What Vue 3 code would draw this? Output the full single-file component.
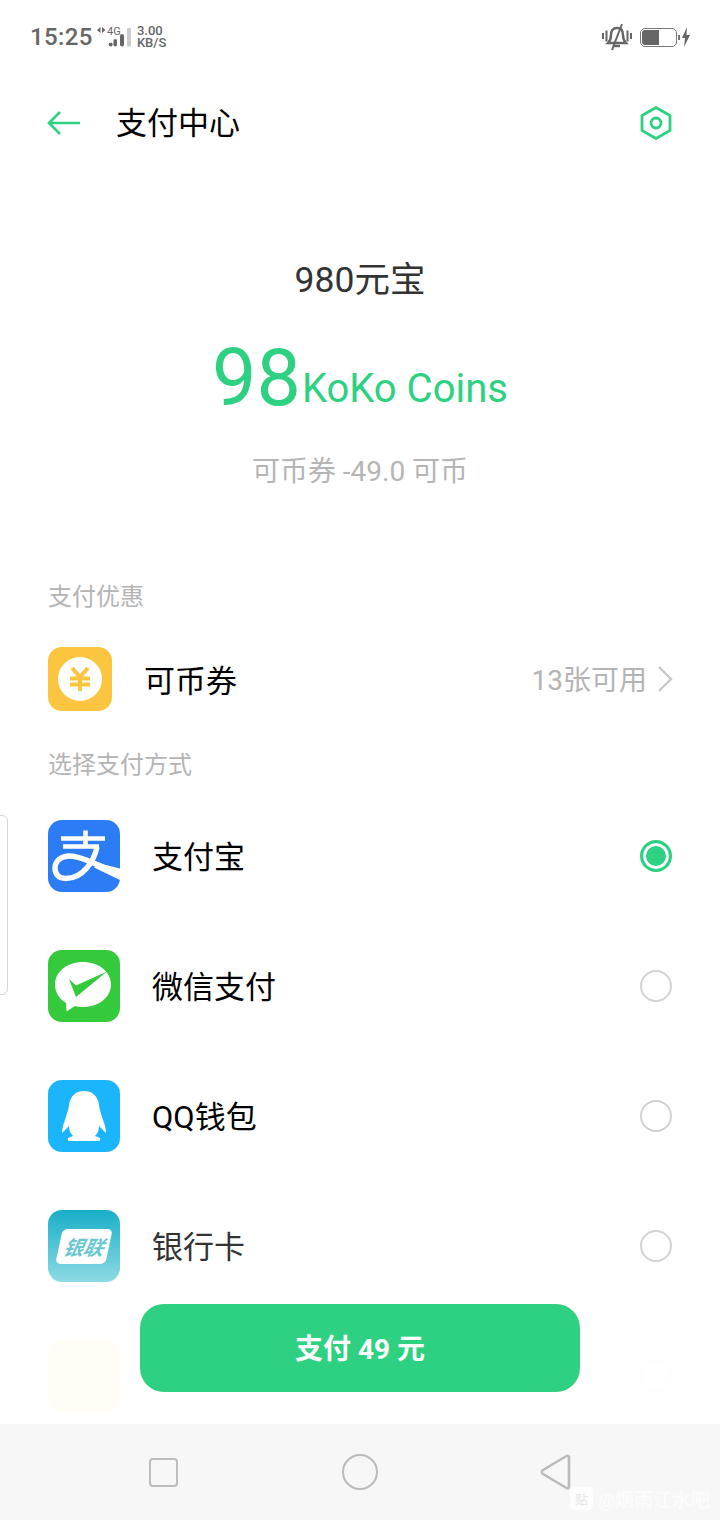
<template>
  <div class="page">
    <header class="status">
      <div class="status__left">
        <span class="status__time">15:25</span>
        <svg class="status__signal" width="38" height="26" viewBox="0 0 38 26">
          <path d="M4.500 3v6L1 6zM6 3v6l3.500-3z" fill="#666" />
          <text x="11" y="11" class="status__net">4G</text>
          <circle cx="14.700" cy="20.500" r="2" fill="#666" />
          <rect x="17.500" y="15" width="3.500" height="7.500" rx="1.700" fill="#666" />
          <rect x="24" y="10" width="4" height="12.500" rx="2" fill="#666" />
          <rect x="31" y="4" width="4" height="18.500" rx="1" fill="#ccc" />
        </svg>
        <div class="status__speed">
          <span>3.00</span>
          <span>KB/S</span>
        </div>
      </div>
      <div class="status__right">
        <svg width="30" height="28" viewBox="0 0 30 28" fill="none" stroke="#666">
          <path d="M1 10v6M4.500 7.500v11M25.500 7.500v11M29 10v6" stroke-width="2" />
          <path d="M15 5c-4.500 0-6 3-6 7 0 4-1 6-3 8h18c-2-2-3-4-3-8 0-4-1.500-7-6-7z" stroke-width="2.400" />
          <path d="M11 23h7" stroke-width="2.400" />
          <path d="M20 1L10 27" stroke-width="2" />
        </svg>
        <div class="battery"><div class="battery__fill"></div></div>
        <span class="battery__tip"></span>
        <svg width="8" height="20" viewBox="0 0 8 20"><path d="M5 0L0 11h3l-1 9 6-12H4.500z" fill="#666" /></svg>
      </div>
    </header>

    <nav class="topbar">
      <div class="topbar__left">
        <svg width="34" height="26" viewBox="0 0 34 26" fill="none" stroke="#2dd181" stroke-width="2.600">
          <path d="M33 13H2M13 2L2 13l11 11" />
        </svg>
        <h1 class="topbar__title">支付中心</h1>
      </div>
      <svg width="34" height="36" viewBox="0 0 34 36" fill="none" stroke="#2dd181" stroke-width="2.800">
        <path d="M17 2.500l14 8v15l-14 8-14-8v-15z" stroke-linejoin="round" />
        <circle cx="17" cy="18" r="5" />
      </svg>
    </nav>

    <section class="summary">
      <div class="summary__name">980元宝</div>
      <div class="summary__price"><span class="summary__num">98</span><span class="summary__unit">KoKo Coins</span></div>
      <div class="summary__note">可币券 -49.0 可币</div>
    </section>

    <div class="label label--first">支付优惠</div>
    <div class="coupon">
      <div class="coupon__icon">
        <div class="coupon__coin">
          <svg width="22" height="24" viewBox="0 0 22 24" fill="none" stroke="#fcc53f" stroke-width="4">
            <path d="M3 1l8 9 8-9M11 10v14M1 11.500h20M1 17.500h20" />
          </svg>
        </div>
      </div>
      <span class="coupon__name">可币券</span>
      <span class="coupon__count">13张可用</span>
      <svg width="16" height="26" viewBox="0 0 16 26" fill="none" stroke="#c9c9c9" stroke-width="2.400">
        <path d="M2 1l12 12L2 25" />
      </svg>
    </div>

    <div class="label">选择支付方式</div>
    <ul class="methods">
      <li v-for="m in methods" :key="m.id" class="method" :class="{ 'method--hidden': m.id === 'other' }">
        <div class="method__icon" :class="'method__icon--' + m.id">
          <svg v-if="m.id === 'alipay'" width="72" height="72" viewBox="0 0 72 72" fill="none" stroke="#fff">
            <path d="M37.500 10.500V27M13 18.500h44M15 26.500h36" stroke-width="4.600" />
            <path d="M49 27C46 41 35 58.500 18 58.500C10 58.500 7 54 7 48C7 41 13 36 22 36C33 36 46 44 60 49" stroke-width="5.400" />
            <path d="M50 43L72 48.500V60L46 47.500z" fill="#fff" stroke="none" />
          </svg>
          <svg v-else-if="m.id === 'wechat'" width="72" height="72" viewBox="0 0 72 72">
            <path d="M35 12c16 0 28 10 28 22.500S51 57 35 57c-2.500 0-5.500-.300-8-1l-8.500 5.500L18 53C11 49 7 42 7 34.500 7 22 19 12 35 12z" fill="#fff" />
            <path d="M21 29l7 6.500L59 21.500 28 47z" fill="#35c93c" />
          </svg>
          <svg v-else-if="m.id === 'qq'" width="72" height="72" viewBox="0 0 72 72">
            <path d="M36 11C27 11 22 17 21 25C20 32 18 36 17 40C15 45 14 49 14 53L21 46C21 51 23 54 25 56L20 58Q19 61 22 61H50Q53 61 52 58L47 56C49 54 51 51 51 46L58 53C58 49 57 45 55 40C54 36 52 32 51 25C50 17 45 11 36 11Z" fill="#fff" />
          </svg>
          <div v-else-if="m.id === 'union'" class="union">
            <span class="union__text">银联</span>
          </div>
        </div>
        <span class="method__name" :class="{ 'method__name--soft': m.id === 'union' }">{{ m.name }}</span>
        <span class="radio" :class="{ 'radio--on': m.checked }"></span>
      </li>
    </ul>

    <button class="pay">支付 49 元</button>

    <span class="edge-tab"></span>

    <footer class="navbar">
      <span class="navbar__square"></span>
      <span class="navbar__circle"></span>
      <svg width="32" height="36" viewBox="0 0 32 36" fill="none" stroke="#bbb" stroke-width="2.600">
        <path d="M29 3.500c0-1.500-1-2-2.500-1.500L3 16c-1.500 1-1.500 3 0 4l23.500 14c1.500.5 2.500 0 2.500-1.500z" stroke-linejoin="round" />
      </svg>
      <div class="watermark">
        <span class="watermark__logo">贴</span>
        <span>@烟雨江水吧</span>
      </div>
    </footer>
  </div>
</template>

<script setup>
const methods = [
  { id: 'alipay', name: '支付宝', checked: true },
  { id: 'wechat', name: '微信支付', checked: false },
  { id: 'qq', name: 'QQ钱包', checked: false },
  { id: 'union', name: '银行卡', checked: false },
  { id: 'other', name: '', checked: false }
]
</script>

<style>
html,
body {
  margin: 0;
  background: #fff;
}
</style>

<style scoped>
.page {
  position: relative;
  width: 720px;
  height: 1520px;
  overflow: hidden;
  background: #fff;
  font-family: Roboto, "Noto Sans CJK SC", sans-serif;
}

/* статус */
.status {
  display: flex;
  justify-content: space-between;
  align-items: center;
  height: 30px;
  padding: 22px 30px 0;
  color: #666;
}

.status__left,
.status__right {
  display: flex;
  align-items: center;
}

.status__time {
  font-size: 24px;
  font-weight: 500;
  letter-spacing: .4px;
}

.status__signal {
  margin-left: 3px;
}

.status__net {
  font-size: 11px;
  fill: #666;
  font-family: Roboto, sans-serif;
}

.status__speed {
  display: flex;
  flex-direction: column;
  margin-left: 3px;
  font-size: 13px;
  font-weight: 500;
  line-height: 12px;
}

.battery {
  width: 37px;
  height: 19px;
  margin-left: 8px;
  padding: 1px;
  box-sizing: border-box;
  border: 1px solid #777;
  border-radius: 5px;
}

.battery__fill {
  width: 17px;
  height: 15px;
  background: #666;
  border-radius: 3px 0 0 3px;
}

.battery__tip {
  width: 2px;
  height: 5px;
  margin: 0 2px 0 1px;
  background: #777;
}

/* шапка */
.topbar {
  display: flex;
  justify-content: space-between;
  align-items: center;
  height: 52px;
  margin-top: 45px;
  padding: 0 47px;
}

.topbar__left {
  display: flex;
  align-items: center;
  gap: 35px;
}

.topbar__title {
  margin: 0 0 6px;
  font-size: 31px;
  font-weight: 400;
  color: #000;
}

/* сумма */
.summary {
  padding-top: 107px;
  text-align: center;
}

.summary__name {
  font-size: 35.500px;
  line-height: 48px;
  color: #333;
}

.summary__price {
  margin-top: 28px;
  line-height: 92px;
  color: #2dd181;
}

.summary__num {
  font-size: 79px;
}

.summary__unit {
  margin-left: 1px;
  font-size: 40px;
  vertical-align: 3px;
}

.summary__note {
  margin-top: 6px;
  font-size: 28px;
  line-height: 40px;
  color: #b5b5b5;
}

/* подписи */
.label {
  padding-left: 48px;
  font-size: 24px;
  line-height: 34px;
  color: #b4b4b4;
}

.label--first {
  margin-top: 88px;
}

/* купон */
.coupon {
  display: flex;
  align-items: center;
  height: 64px;
  margin: 33px 0 37px;
  padding: 0 47px 0 48px;
}

.coupon__icon {
  display: flex;
  align-items: center;
  justify-content: center;
  width: 64px;
  height: 64px;
  background: #fcc53f;
  border-radius: 14px;
}

.coupon__coin {
  display: flex;
  align-items: center;
  justify-content: center;
  width: 44px;
  height: 44px;
  background: #fff;
  border-radius: 50%;
}

.coupon__name {
  margin: 0 0 2px 32px;
  font-size: 31px;
  color: #000;
}

.coupon__count {
  margin: 0 10px 2px auto;
  font-size: 28px;
  color: #b4b4b4;
}

/* способы оплаты */
.methods {
  margin: 0;
  padding: 38px 48px 0;
  list-style: none;
}

.method {
  display: flex;
  align-items: center;
  height: 72px;
  margin-bottom: 58px;
}

.method--hidden {
  opacity: .04;
}

.method__icon {
  display: flex;
  align-items: center;
  justify-content: center;
  width: 72px;
  height: 72px;
  border-radius: 14px;
  overflow: hidden;
}

.method__icon--alipay {
  background: #2c7cf6;
}

.method__icon--wechat {
  background: #35c93c;
}

.method__icon--qq {
  background: #1bb5fb;
}

.method__icon--union {
  background: linear-gradient(#19aec9, #8ddbe3);
}

.method__icon--other {
  background: #f9c400;
}

.union {
  display: flex;
  align-items: center;
  justify-content: center;
  width: 50px;
  height: 35px;
  background: #fff;
  border-radius: 5px;
  transform: skewX(-12deg);
}

.union__text {
  font-size: 20px;
  font-weight: 700;
  font-style: italic;
  color: #6cc7d3;
}

.method__name {
  margin: 0 0 4px 32px;
  font-size: 31px;
  color: #000;
}

.method__name--soft {
  color: #333;
}

.radio {
  width: 32px;
  height: 32px;
  margin-left: auto;
  box-sizing: border-box;
  border: 2px solid #d2d2d2;
  border-radius: 50%;
}

.radio--on {
  border: 3px solid #2dd181;
  background: #2dd181;
  box-shadow: inset 0 0 0 3px #fff;
}

/* кнопка поверх списка */
.pay {
  position: absolute;
  left: 140px;
  top: 1304px;
  width: 440px;
  height: 88px;
  padding: 0 0 2px;
  border: 0;
  border-radius: 24px;
  background: #2dd181;
  color: #fff;
  font-family: inherit;
  font-size: 28px;
  font-weight: 700;
}

.edge-tab {
  position: absolute;
  left: -10px;
  top: 815px;
  width: 16px;
  height: 178px;
  border: 1px solid #d5d5d5;
  border-radius: 6px;
}

/* системная панель */
.navbar {
  position: absolute;
  left: 0;
  right: 0;
  bottom: 0;
  display: flex;
  align-items: center;
  justify-content: space-between;
  height: 96px;
  padding: 0 148px 0 149px;
  box-sizing: border-box;
  background: #f7f7f7;
}

.navbar__square {
  width: 29px;
  height: 29px;
  box-sizing: border-box;
  border: 2.500px solid #bdbdbd;
  border-radius: 4px;
}

.navbar__circle {
  width: 36px;
  height: 36px;
  margin-left: 2px;
  box-sizing: border-box;
  border: 2.500px solid #bbb;
  border-radius: 50%;
}

.watermark {
  position: absolute;
  right: 10px;
  bottom: 8px;
  display: flex;
  align-items: center;
  gap: 5px;
  color: #fff;
  font-size: 19px;
  opacity: .85;
}

.watermark__logo {
  display: flex;
  align-items: center;
  justify-content: center;
  width: 23px;
  height: 23px;
  background: #fff;
  border-radius: 5px;
  color: #e4e4e4;
  font-size: 13px;
}
</style>
